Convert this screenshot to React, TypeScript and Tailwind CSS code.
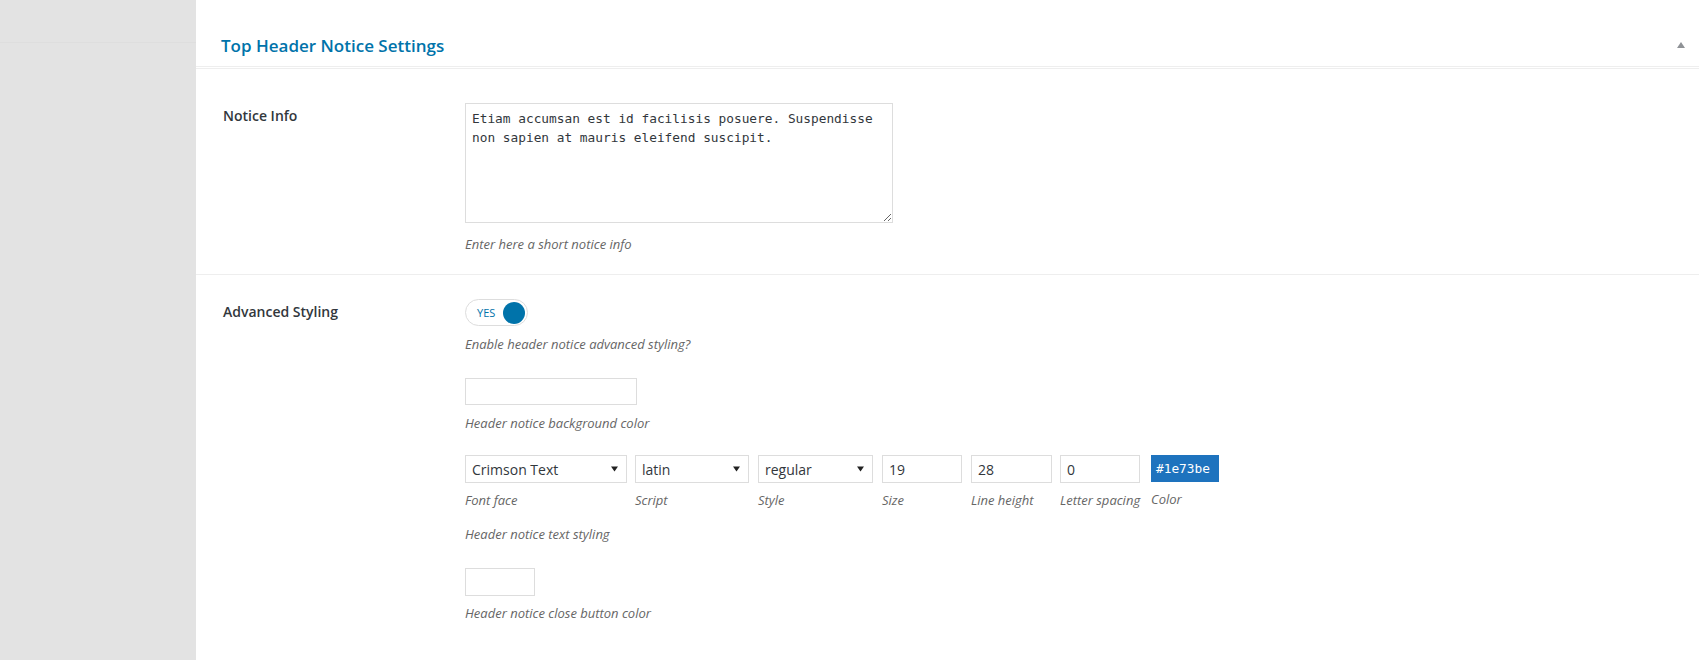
import React from "react";

function Arrow() {
  return (
    <svg width="7" height="6" viewBox="0 0 7 6" className="shrink-0">
      <path d="M0 0.5 L7 0.5 L3.5 5.5 Z" fill="#222" />
    </svg>
  );
}

export default function App() {
  const hint = "text-[13px] italic text-[#666] leading-[20px] whitespace-nowrap";
  const label = "text-[14px] font-semibold text-[#32373c] leading-[20px]";
  const cols: { label: string; w: string; mr: string; kind: "select" | "input" | "color"; value: string }[] = [
    { label: "Font face", w: "w-[162px]", mr: "mr-[8px]", kind: "select", value: "Crimson Text" },
    { label: "Script", w: "w-[114px]", mr: "mr-[9px]", kind: "select", value: "latin" },
    { label: "Style", w: "w-[115px]", mr: "mr-[9px]", kind: "select", value: "regular" },
    { label: "Size", w: "w-[80px]", mr: "mr-[9px]", kind: "input", value: "19" },
    { label: "Line height", w: "w-[81px]", mr: "mr-[8px]", kind: "input", value: "28" },
    { label: "Letter spacing", w: "w-[80px]", mr: "mr-[11px]", kind: "input", value: "0" },
    { label: "Color", w: "w-[68px]", mr: "mr-0", kind: "color", value: "#1e73be" },
  ];
  return (
    <div className="flex h-[660px] w-full overflow-hidden font-['Open_Sans',sans-serif] bg-white">
      <div className="w-[196px] shrink-0 bg-[#e3e3e3]">
        <div className="h-[43px] border-b border-[#dedede]" />
      </div>
      <div className="flex-1 flex flex-col bg-white">
        <div className="h-[67px] border-b border-[#eee] flex items-start justify-between pl-[25px] pr-[14px]">
          <h2 className="pt-[33px] text-[17px] font-semibold text-[#0073aa] leading-[25px]">
            Top Header Notice Settings
          </h2>
          <svg width="8" height="6" viewBox="0 0 8 6" className="mt-[42px]">
            <path d="M4 0 L8 6 L0 6 Z" fill="#8f9296" />
          </svg>
        </div>
        <div className="mt-[1px] border-t border-[#eee]" />
        {/* Notice Info row */}
        <div className="flex pt-[34px] pb-[20px] border-b border-[#eee]">
          <div className={`w-[269px] shrink-0 pl-[27px] pt-[3px] ${label}`}>Notice Info</div>
          <div className="flex flex-col">
            <textarea
              readOnly
              defaultValue="Etiam accumsan est id facilisis posuere. Suspendisse non sapien at mauris eleifend suscipit."
              className="w-[428px] h-[120px] border border-[#ddd] pt-[5px] px-[6px] font-['DejaVu_Sans_Mono',monospace] text-[12.8px] leading-[19px] text-[#32373c] outline-none resize"
            />
            <div className={`mt-[11px] ${hint}`}>Enter here a short notice info</div>
          </div>
        </div>
        {/* Advanced styling row */}
        <div className="flex pt-[24px]">
          <div className={`w-[269px] shrink-0 pl-[27px] pt-[3px] ${label}`}>Advanced Styling</div>
          <div className="flex flex-col">
            <div className="w-[63px] h-[27px] rounded-full border border-[#ddd] bg-white flex items-center justify-between pl-[11px] pr-[2px]">
              <span className="text-[11px] text-[#0073aa] leading-none">YES</span>
              <span className="w-[22px] h-[22px] rounded-full bg-[#0073aa]" />
            </div>
            <div className={`mt-[8px] ${hint}`}>Enable header notice advanced styling?</div>
            <div className="mt-[24px] w-[172px] h-[27px] border border-[#ddd] bg-white" />
            <div className={`mt-[8px] ${hint}`}>Header notice background color</div>
            <div className="mt-[22px] flex">
              {cols.map((c) => (
                <div key={c.label} className={`${c.w} ${c.mr} shrink-0 flex flex-col`}>
                  {c.kind === "select" && (
                    <div className="h-[28px] border border-[#ddd] bg-white flex items-center justify-between pl-[6px] pr-[8px] text-[14px] text-[#32373c]">
                      <span>{c.value}</span>
                      <Arrow />
                    </div>
                  )}
                  {c.kind === "input" && (
                    <div className="h-[28px] border border-[#ddd] bg-white flex items-center pl-[6px] text-[14px] text-[#32373c]">
                      {c.value}
                    </div>
                  )}
                  {c.kind === "color" && (
                    <div className="h-[27px] bg-[#1e73be] flex items-center pl-[5px] font-['DejaVu_Sans_Mono',monospace] text-[12.8px] text-white">
                      {c.value}
                    </div>
                  )}
                  <div className={`mt-[7px] ${hint}`}>{c.label}</div>
                </div>
              ))}
            </div>
            <div className={`mt-[14px] ${hint}`}>Header notice text styling</div>
            <div className="mt-[24px] w-[70px] h-[28px] border border-[#ddd] bg-white" />
            <div className={`mt-[7px] ${hint}`}>Header notice close button color</div>
          </div>
        </div>
      </div>
    </div>
  );
}
